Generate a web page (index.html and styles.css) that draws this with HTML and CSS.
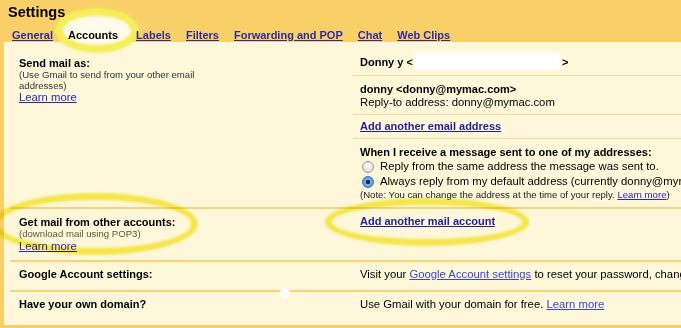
FILE: index.html
```html
<!DOCTYPE html>
<html lang="en">
<head>
    <meta charset="UTF-8">
    <title>Settings - Accounts</title>
    <link rel="stylesheet" href="styles.css">
</head>
<body>

<header class="top">
    <h1>Settings</h1>
    <nav class="tabs">
        <a href="#">General</a>
        <span class="tab-current">Accounts</span>
        <a href="#">Labels</a>
        <a href="#">Filters</a>
        <a href="#">Forwarding and POP</a>
        <a href="#">Chat</a>
        <a href="#">Web Clips</a>
    </nav>
</header>

<div class="panel">
    <!-- Send mail as -->
    <div class="row row-first">
        <div class="label">
            <b>Send mail as:</b>
            <div class="hint">(Use Gmail to send from your other email addresses)</div>
            <a href="#">Learn more</a>
        </div>
        <div class="value">
            <div class="sub sub-a"><b>Donny y &lt;<span class="redact"></span>&gt;</b></div>
            <div class="sub sub-b">
                <b>donny &lt;donny@mymac.com&gt;</b><br>
                Reply-to address: donny@mymac.com
            </div>
            <div class="sub sub-c"><a class="strong-link" href="#">Add another email address</a></div>
            <div class="sub sub-d">
                <div class="ask"><b>When I receive a message sent to one of my addresses:</b></div>
                <div class="choice"><span class="radio"></span>Reply from the same address the message was sent to.</div>
                <div class="choice"><span class="radio radio-on"></span>Always reply from my default address (currently donny@mymac.com)</div>
                <div class="note">(Note: You can change the address at the time of your reply. <a href="#">Learn more</a>)</div>
            </div>
        </div>
    </div>

    <!-- Get mail -->
    <div class="row row-pop">
        <div class="label">
            <b>Get mail from other accounts:</b>
            <div class="hint">(download mail using POP3)</div>
            <a href="#">Learn more</a>
        </div>
        <div class="value value-plain">
            <a class="strong-link" href="#">Add another mail account</a>
        </div>
    </div>

    <!-- Google account -->
    <div class="row row-google">
        <div class="label"><b>Google Account settings:</b></div>
        <div class="value value-plain">
            Visit your <a class="light-link" href="#">Google Account settings</a> to reset your password, change your security question, and more.
        </div>
    </div>

    <!-- Domain -->
    <div class="row row-domain">
        <div class="label"><b>Have your own domain?</b></div>
        <div class="value value-plain">
            Use Gmail with your domain for free. <a class="light-link" href="#">Learn more</a>
        </div>
    </div>
</div>

<!-- highlight marks drawn over the screenshot -->
<div class="mark mark-pop"></div>
<div class="mark mark-add"></div>
<div class="glint"></div>

</body>
</html>
```

FILE: styles.css
```css
body {
    margin: 0;
    position: relative;
    width: 681px;
    height: 328px;
    overflow: hidden;
    background-color: #FFF7D9;
    font-family: "Liberation Sans", Arial, sans-serif;
    font-size: 11.3px;
    color: #000;
}

b {
    font-size: 11px;
}

a {
    color: #2626c4;
}

/* Header band */
.top {
    position: relative;
    z-index: 0;
    background-color: #F9D067;
    height: 42px;
    box-sizing: border-box;
    padding: 4px 0 0 8px;
}

.top h1 {
    margin: 0;
    font-size: 14.5px;
    line-height: 17px;
}

.tabs {
    display: flex;
    gap: 15px;
    margin: 8px 0 0 4px;
    font-size: 11px;
    font-weight: bold;
    line-height: 13px;
}

.tabs a {
    color: #2b2ba6;
}

.tab-current {
    position: relative;
    margin-right: 3px;
}

/* yellow ring round the current tab */
.tab-current::before {
    content: "";
    position: absolute;
    left: -13px;
    top: -21px;
    width: 68px;
    height: 29px;
    border: 8px solid #F4EE5A;
    border-radius: 50%;
    background-color: #FFFAEA;
    filter: blur(1px);
    z-index: -1;
}

/* Content panel */
.panel {
    border-left: 4px solid #F6CF66;
    border-bottom: 3px solid #F6CF66;
    padding-left: 6px;
    height: 286px;
    box-sizing: border-box;
}

.row {
    display: grid;
    grid-template-columns: 343px 1fr;
    border-top: 2px solid #F5D57A;
}

.row-first {
    border-top: none;
}

.label {
    padding-left: 9px;
    width: 210px;
}

.label b {
    display: block;
    line-height: 14px;
}

.label a {
    display: block;
    font-size: 11.3px;
    line-height: 13px;
}

.hint {
    font-size: 9.6px;
    line-height: 10.5px;
    color: #333;
}

.row-first .label {
    padding-top: 14px;
}

.row-pop .label {
    padding: 6px 0 7px 9px;
}

.row-pop .hint {
    color: #5a5a3a;
}

.row-google .label,
.row-domain .label {
    padding-top: 6px;
}

.row-google .label b,
.row-domain .label b {
    line-height: 13px;
}

.value {
    white-space: nowrap;
    overflow: hidden;
}

.value-plain {
    padding: 6px 0 0 7px;
    line-height: 13px;
}

.row-google .value-plain {
    padding-bottom: 9px;
}

.row-domain .value-plain {
    padding-bottom: 14px;
}

.sub {
    padding-left: 7px;
    border-bottom: 1px solid #F2DC9A;
}

.sub-a {
    padding-top: 13px;
    padding-bottom: 6px;
    line-height: 13px;
}

.redact {
    display: inline-block;
    width: 142px;
    height: 13px;
    margin: 0 4px 0 3px;
    vertical-align: -2px;
    background-color: #fff;
    box-shadow: 0 0 3px 2px #fff;
}

.sub-b {
    padding-top: 7px;
    padding-bottom: 6px;
    line-height: 12.5px;
}

.sub-c {
    padding-top: 5px;
    padding-bottom: 5px;
    line-height: 13px;
}

.strong-link {
    font-weight: bold;
    font-size: 11px;
    color: #1e1e9e;
}

.light-link {
    color: #3746d4;
}

.sub-d {
    border-bottom: none;
    padding-top: 6px;
    padding-bottom: 6px;
}

.ask {
    line-height: 14px;
}

.choice {
    display: flex;
    align-items: center;
    line-height: 15px;
}

.radio {
    width: 10px;
    height: 10px;
    margin: 0 6px 0 2px;
    border: 1px solid #9a9a9a;
    border-radius: 50%;
    background: radial-gradient(circle at 50% 35%, #ffffff, #d4d4d4);
    flex-shrink: 0;
}

.radio-on {
    border-color: #3a6fb8;
    background: radial-gradient(circle, #1b2a44 0 2px, #7fb4ee 2.5px, #3a7fd4 100%);
}

.note {
    font-size: 9.6px;
    line-height: 12px;
    color: #222;
}

/* Highlight marks */
.mark {
    position: absolute;
    border: 7px solid #F4EE5A;
    border-radius: 50%;
    mix-blend-mode: multiply;
    filter: blur(1px);
    pointer-events: none;
}

.mark-pop {
    left: -8px;
    top: 193px;
    width: 192px;
    height: 48px;
}

.mark-add {
    left: 325px;
    top: 198px;
    width: 190px;
    height: 34px;
}

.glint {
    position: absolute;
    left: 279px;
    top: 287px;
    width: 12px;
    height: 12px;
    border-radius: 50%;
    background: radial-gradient(circle, #ffffff 40%, rgba(255, 255, 255, 0) 70%);
}
```
